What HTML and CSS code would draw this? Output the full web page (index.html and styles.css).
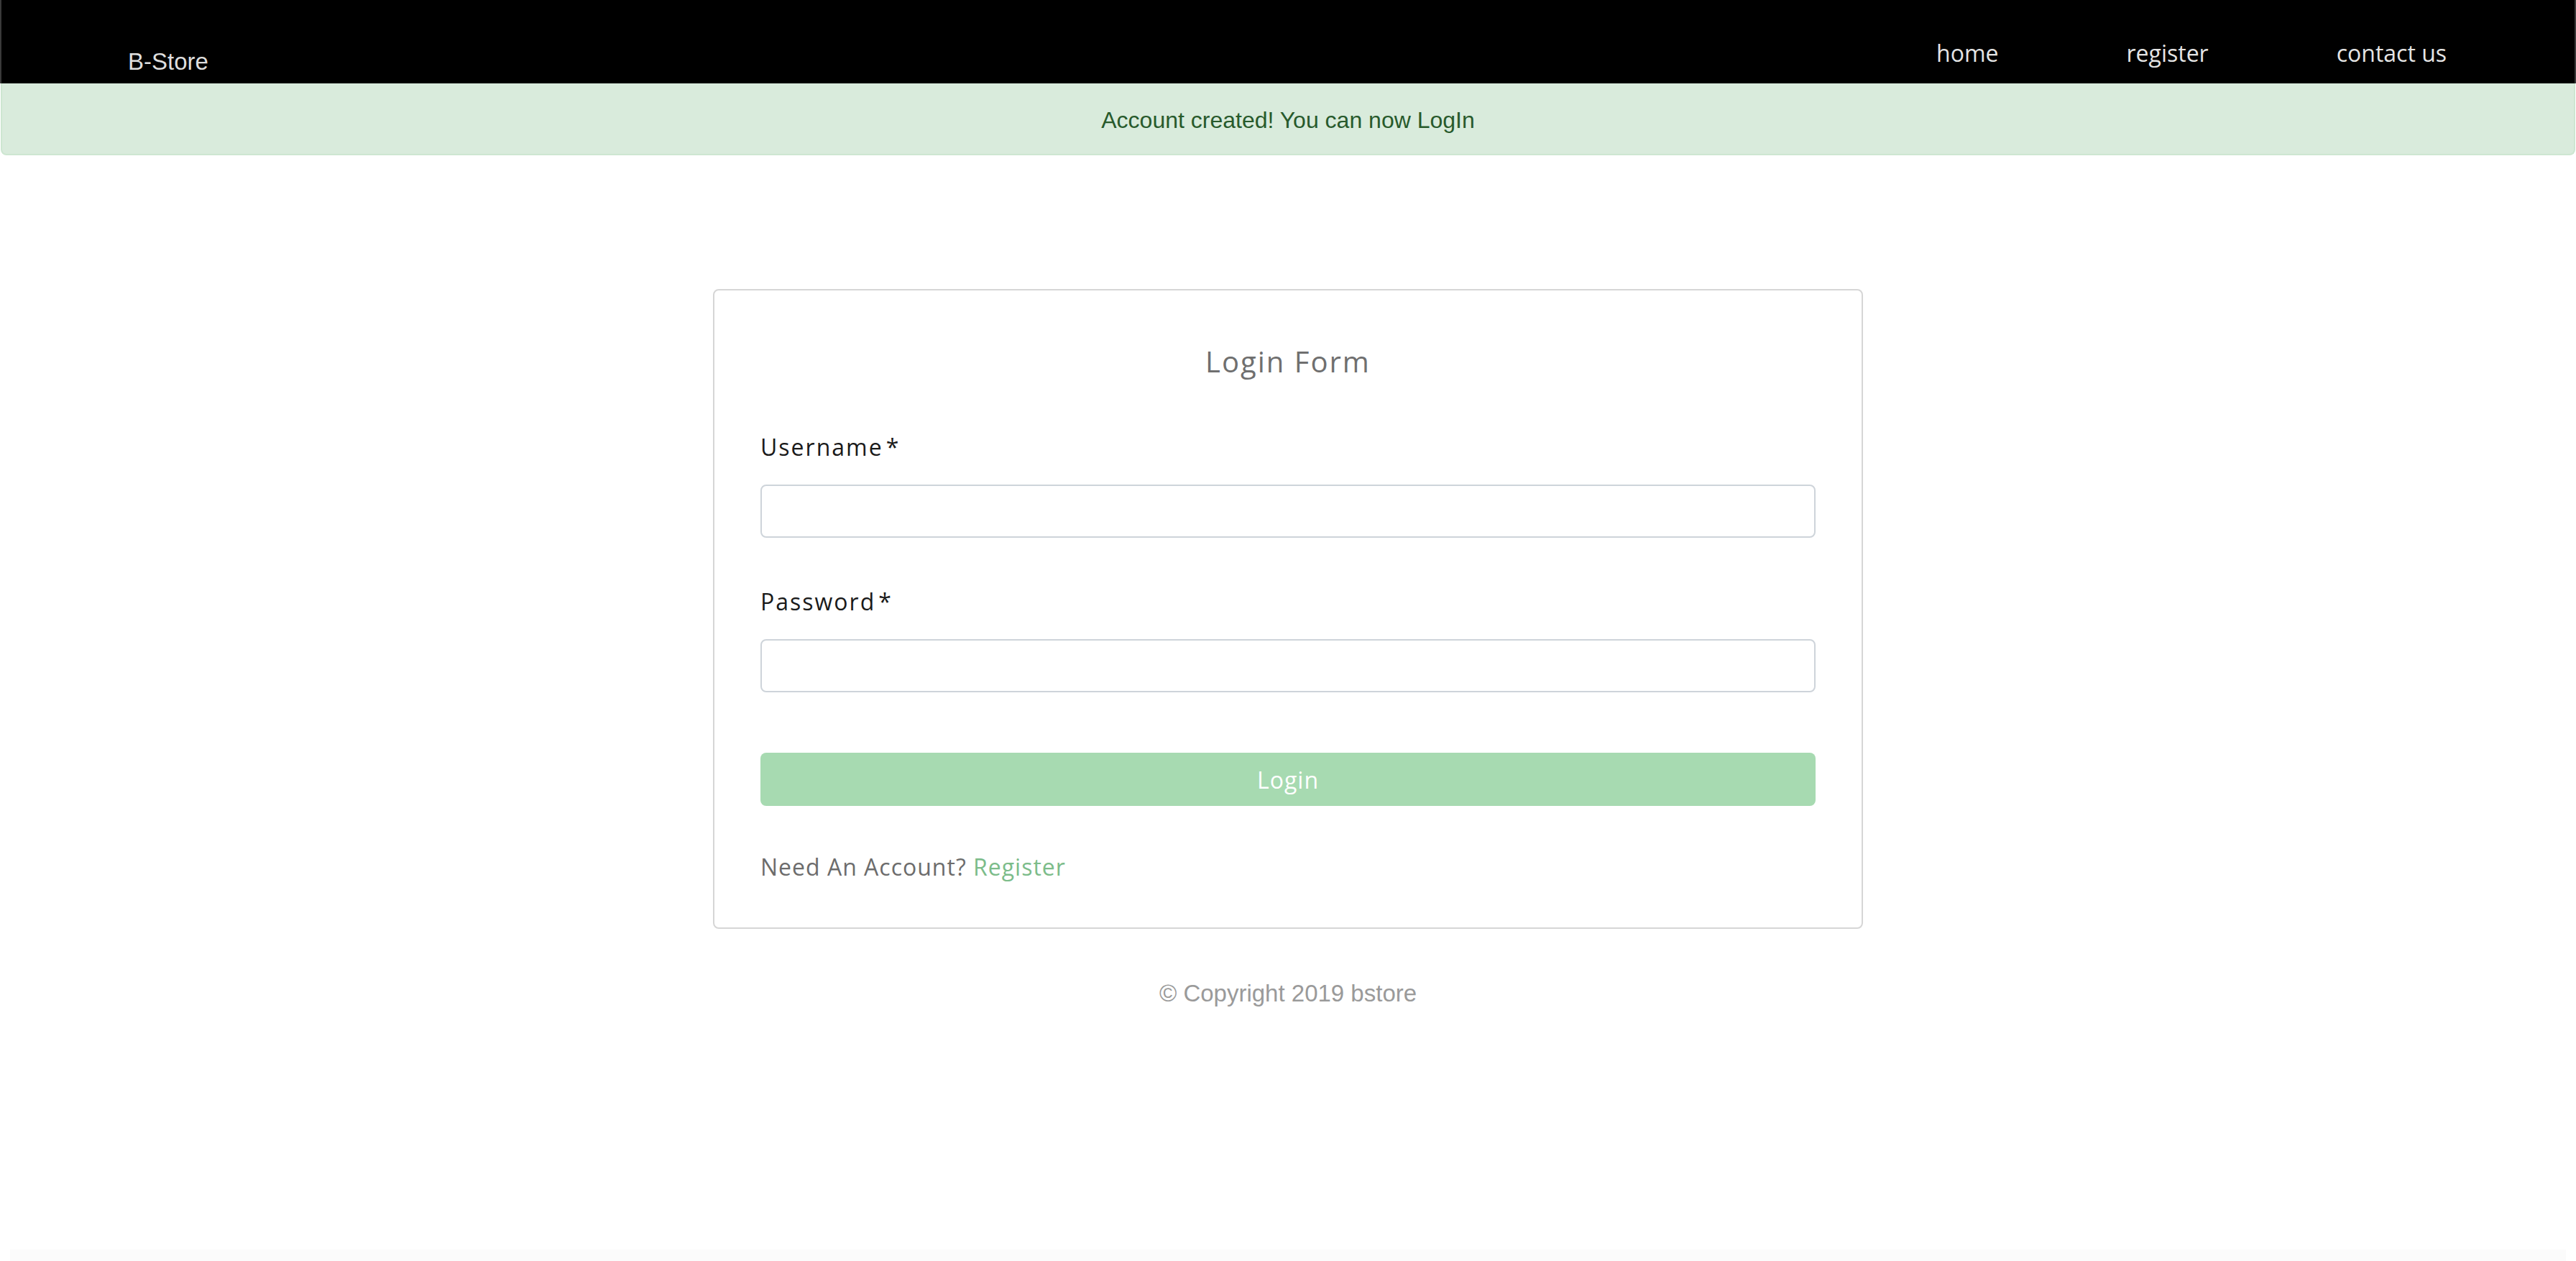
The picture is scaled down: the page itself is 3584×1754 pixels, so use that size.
FILE: index.html
```html
<!DOCTYPE html>
<html lang="en">
<head>
<meta charset="utf-8">
<title>B-Store | Login</title>
<link rel="stylesheet" href="styles.css">
</head>
<body>
<div class="page">
  <header class="navbar">
    <a class="brand" href="#">B-Store</a>
    <nav class="nav">
      <a class="nav-link" href="#">home</a>
      <a class="nav-link" href="#">register</a>
      <a class="nav-link" href="#">contact us</a>
    </nav>
  </header>
  <div class="alert">Account created! You can now LogIn</div>

  <main class="content">
    <form class="card">
      <h2 class="card-title">Login Form</h2>
      <div class="field">
        <label class="label" for="username">Username<span class="req">*</span></label>
        <input class="input" id="username" type="text">
      </div>
      <div class="field">
        <label class="label" for="password">Password<span class="req">*</span></label>
        <input class="input" id="password" type="password">
      </div>
      <button class="btn" type="button">Login</button>
      <p class="note">Need An Account? <a class="note-link" href="#">Register</a></p>
    </form>
    <p class="copyright">© Copyright 2019 bstore</p>
  </main>

  <div class="bottom-bar"></div>
</div>
</body>
</html>
```

FILE: styles.css
```css
html, body {
  margin: 0;
  padding: 0;
  background: #ffffff;
}

.page {
  min-height: 100vh;
  display: flex;
  flex-direction: column;
}

.navbar {
  height: 116px;
  box-sizing: border-box;
  background: #000000;
  border-left: 2px solid #3a3a3a;
  border-right: 2px solid #3a3a3a;
  display: flex;
  justify-content: space-between;
  align-items: flex-start;
}

.brand {
  font-family: "Liberation Sans", Arial, sans-serif;
  font-size: 33px;
  line-height: 40px;
  color: #dedede;
  text-decoration: none;
  margin-left: 176px;
  margin-top: 66px;
}

.nav {
  display: flex;
  gap: 178px;
  padding-right: 178px;
  margin-top: 52px;
}

.nav-link {
  font-family: "Open Sans", sans-serif;
  font-size: 32px;
  line-height: 44px;
  color: #e4e4e4;
  text-decoration: none;
}

.alert {
  margin: 0 1px;
  height: 100px;
  box-sizing: border-box;
  padding-top: 4px;
  background: #d9ebdc;
  border: 2px solid #cde6d1;
  border-top: none;
  border-radius: 0 0 8px 8px;
  display: flex;
  align-items: center;
  justify-content: center;
  font-family: "Liberation Sans", Arial, sans-serif;
  font-size: 32px;
  color: #285a2c;
}

.content {
  display: flex;
  flex-direction: column;
  align-items: center;
  padding-top: 186px;
}

.card {
  width: 1600px;
  box-sizing: border-box;
  border: 2px solid #d6d6d6;
  border-radius: 8px;
  padding: 69px 64px 60px;
  font-family: "Open Sans", sans-serif;
}

.card-title {
  margin: 0;
  text-align: center;
  font-size: 40px;
  line-height: 60px;
  font-weight: 400;
  letter-spacing: 2px;
  color: #6f6f6f;
}

.field {
  margin-top: 65px;
}

.label {
  display: block;
  font-size: 32px;
  line-height: 48px;
  letter-spacing: 2px;
  color: #1a1a1a;
}

.req {
  margin-left: 4px;
}

.input {
  display: block;
  margin-top: 28px;
  width: 100%;
  height: 74px;
  box-sizing: border-box;
  border: 2px solid #ced4da;
  border-radius: 8px;
  background: #ffffff;
  font-size: 32px;
  padding: 0 24px;
}

.btn {
  display: block;
  width: 100%;
  margin-top: 84px;
  height: 74px;
  border: none;
  border-radius: 8px;
  background: #a7dab1;
  color: #ffffff;
  font-family: "Open Sans", sans-serif;
  font-size: 32px;
  letter-spacing: 1px;
}

.note {
  margin: 61px 0 0;
  font-size: 32px;
  line-height: 48px;
  letter-spacing: 1px;
  color: #6c6c6c;
}

.note-link {
  color: #7cbc8a;
  text-decoration: none;
}

.copyright {
  margin: 66px 0 0;
  font-family: "Liberation Sans", Arial, sans-serif;
  font-size: 33px;
  line-height: 48px;
  color: #9a9a9a;
}

.bottom-bar {
  margin: auto 14px 0;
  height: 16px;
  background: #fbfbfb;
}
```
